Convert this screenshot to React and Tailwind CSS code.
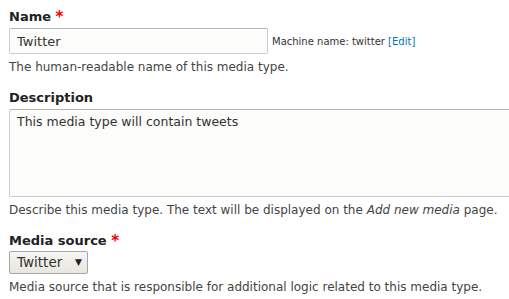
export default function App() {
  return (
    <div className="min-h-[299px] bg-white pl-[9px] pt-[7px] text-[#333] font-['DejaVu_Sans',Verdana,sans-serif] overflow-hidden">
      <div>
        <label className="block text-[13px] font-bold leading-[19px] text-[#222]">
          Name <span className="text-[#e00] text-[15px] align-[-1px]">*</span>
        </label>
        <div className="mt-[1px] flex items-center gap-[4px]">
          <input
            className="h-[26px] w-[259px] rounded-[2px] border border-[#ccc] border-t-[#b4b4b4] bg-[#fcfcfa] px-[7px] text-[13px] text-[#333] outline-none"
            defaultValue="Twitter"
          />
          <span className="text-[10px] text-[#333]">
            Machine name: twitter <span className="text-[#0074bd]">[Edit]</span>
          </span>
        </div>
        <p className="mt-[5px] text-[12px] leading-[16px] text-[#444]">
          The human-readable name of this media type.
        </p>
      </div>

      <div className="mt-[13px]">
        <label className="block text-[13px] font-bold leading-[19px] text-[#222]">Description</label>
        <textarea
          className="mt-[2px] block h-[88px] w-[540px] resize-none rounded-[2px] border border-[#ccc] border-t-[#b4b4b4] bg-[#fcfcfa] px-[7px] py-[3px] text-[12.5px] text-[#333] outline-none"
          defaultValue="This media type will contain tweets"
        />
        <p className="mt-[5px] text-[12px] leading-[16px] text-[#444]">
          Describe this media type. The text will be displayed on the <em>Add new media</em> page.
        </p>
      </div>

      <div className="mt-[13px]">
        <label className="block text-[13px] font-bold leading-[19px] text-[#222]">
          Media source <span className="text-[#e00] text-[15px] align-[-1px]">*</span>
        </label>
        <div className="flex h-[23px] w-[79px] items-center justify-between rounded-[2px] border border-[#a6a6a6] bg-gradient-to-b from-[#f6f6f3] to-[#e7e7df] pl-[7px] pr-[5px] text-[13.5px] text-[#333]">
          <span>Twitter</span>
          <span className="text-[9px] text-[#222]">▼</span>
        </div>
        <p className="mt-[5px] text-[12px] leading-[16px] text-[#444]">
          Media source that is responsible for additional logic related to this media type.
        </p>
      </div>
    </div>
  );
}
